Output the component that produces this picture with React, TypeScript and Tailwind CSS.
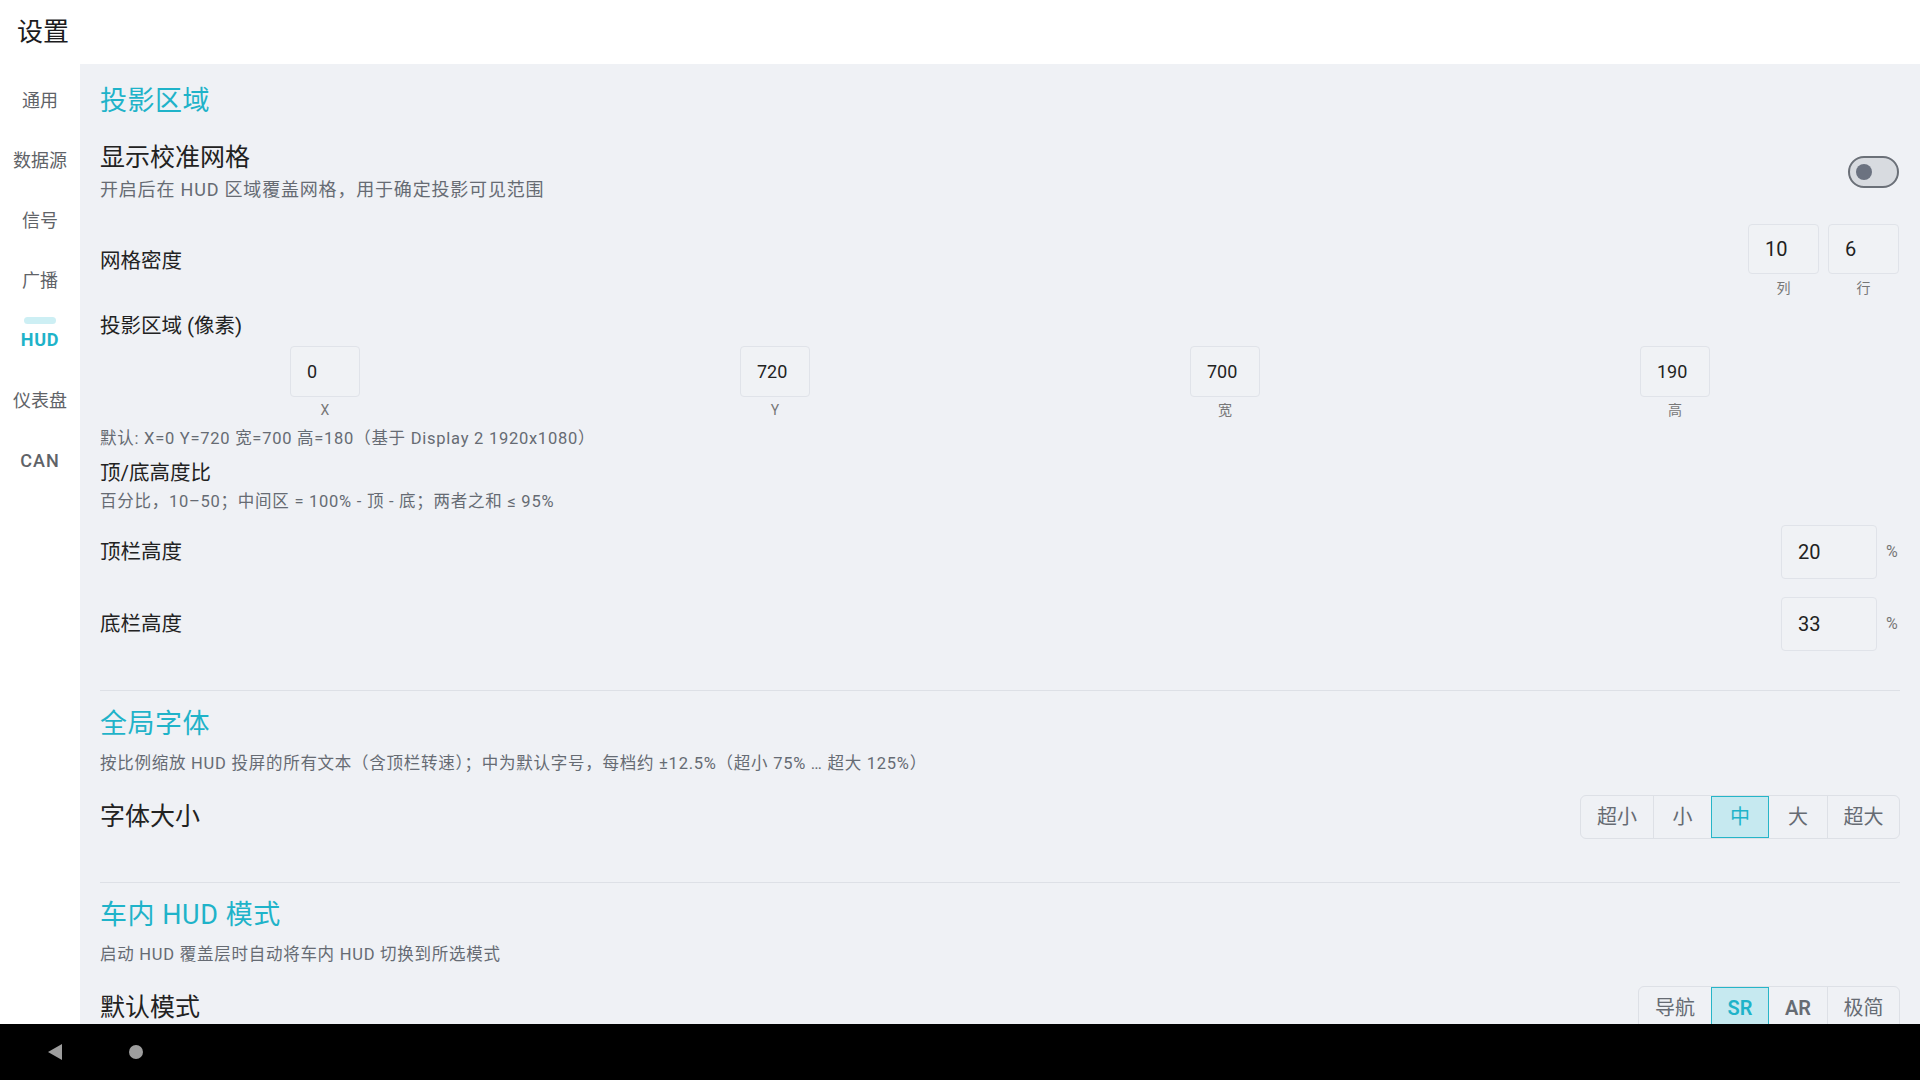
import React from 'react';

const FONT = { fontFamily: 'Roboto, "Noto Sans CJK SC", sans-serif' };

const navItems = ['通用', '数据源', '信号', '广播', 'HUD', '仪表盘', 'CAN'];

function SideNav() {
  return (
    <div className="w-[80px] shrink-0 bg-white pt-[6px]">
      {navItems.map((item) =>
        item === 'HUD' ? (
          <div key={item} className="h-[60px] flex flex-col items-center pt-[7px]">
            <div className="w-[32px] h-[7px] rounded-full bg-[#cdeff4]" />
            <div className="mt-[6px] text-[18px] leading-[20px] font-bold text-[#1fb3c9] tracking-[0.04em]">
              {item}
            </div>
          </div>
        ) : (
          <div
            key={item}
            className={
              'h-[60px] flex items-center justify-center text-[18px] text-[#5f6368] ' +
              (item === 'CAN' ? 'font-medium tracking-[0.06em]' : '')
            }
          >
            {item}
          </div>
        )
      )}
    </div>
  );
}

function Toggle() {
  return (
    <div className="w-[51px] h-[32px] rounded-full border-2 border-[#6b7078] bg-[#d8dbe0] flex items-center pl-[6px]">
      <div className="w-[16px] h-[16px] rounded-full bg-[#6b7280]" />
    </div>
  );
}

function NumBox({ value, className }: { value: string; className: string }) {
  return (
    <div
      className={
        'border border-[#e0e3e9] rounded-[4px] bg-[#f0f2f5] flex items-center pl-[16px] text-[#222] ' + className
      }
    >
      {value}
    </div>
  );
}

function Segmented({ options, active, bold }: { options: { label: string; w: string }[]; active: number; bold?: boolean }) {
  return (
    <div className="flex h-[44px] border border-[#dde0e6] rounded-[6px] overflow-hidden">
      {options.map((o, i) => {
        const isActive = i === active;
        const latin = /^[A-Z]+$/.test(o.label);
        return (
          <div
            key={o.label}
            className={
              'flex items-center justify-center text-[20px] ' +
              o.w +
              ' ' +
              (i > 0 && !isActive && i - 1 !== active ? 'border-l border-[#dde0e6] ' : '') +
              (isActive
                ? 'bg-[#c6e9f0] text-[#1fb3c9] outline outline-[1.5px] outline-[#26b5c8] -outline-offset-[1.5px] '
                : 'text-[#666b73] ') +
              (bold && latin ? 'font-semibold' : '')
            }
          >
            {o.label}
          </div>
        );
      })}
    </div>
  );
}

function SectionTitle({ children, className = '' }: { children: React.ReactNode; className?: string }) {
  return (
    <div className={'text-[27px] leading-[36px] tracking-[0.02em] text-[#1fb3c9] ' + className}>{children}</div>
  );
}

function Desc({ children, className = '' }: { children: React.ReactNode; className?: string }) {
  return (
    <div className={'text-[16.5px] leading-[22px] text-[#666b73] tracking-[0.045em] ' + className}>{children}</div>
  );
}

export default function App() {
  const coords = [
    { v: '0', l: 'X' },
    { v: '720', l: 'Y' },
    { v: '700', l: '宽' },
    { v: '190', l: '高' },
  ];

  return (
    <div style={FONT} className="w-[1920px] h-[1080px] flex flex-col overflow-hidden bg-white">
      {/* Header */}
      <div className="h-[64px] shrink-0 flex items-center pl-[17px] text-[26px] text-[#1c1c1e]">设置</div>

      <div className="flex-1 flex min-h-0">
        <SideNav />

        {/* Content */}
        <div className="flex-1 bg-[#eff1f5] overflow-hidden px-[20px] pt-[19px]">
          <SectionTitle>投影区域</SectionTitle>

          <div className="mt-[23px] h-[60px] flex items-start justify-between">
            <div>
              <div className="text-[25px] leading-[32px] text-[#222]">显示校准网格</div>
              <Desc className="mt-[4px] text-[18px] leading-[24px] tracking-[0.04em]">
                开启后在 HUD 区域覆盖网格，用于确定投影可见范围
              </Desc>
            </div>
            <div className="self-center mr-[1px]">
              <Toggle />
            </div>
          </div>

          <div className="mt-[22px] flex items-center justify-between">
            <div className="text-[20.5px] text-[#222]">网格密度</div>
            <div className="flex gap-[9px] mr-[1px]">
              {[
                { v: '10', l: '列' },
                { v: '6', l: '行' },
              ].map((c) => (
                <div key={c.l} className="flex flex-col items-center">
                  <NumBox value={c.v} className="w-[71px] h-[50px] text-[20px]" />
                  <div className="mt-[4px] text-[14px] leading-[20px] text-[#777]">{c.l}</div>
                </div>
              ))}
            </div>
          </div>

          <div className="mt-[14px] text-[20.5px] leading-[28px] text-[#222]">投影区域 (像素)</div>
          <div className="mt-[6px] flex">
            {coords.map((c) => (
              <div key={c.l} className="flex-1 flex flex-col items-center">
                <NumBox value={c.v} className="w-[70px] h-[51px] text-[18px]" />
                <div className="mt-[3px] text-[14px] leading-[20px] text-[#777]">{c.l}</div>
              </div>
            ))}
          </div>
          <Desc className="mt-[8px]">默认: X=0 Y=720 宽=700 高=180（基于 Display 2 1920x1080）</Desc>

          <div className="mt-[9px] text-[20.5px] leading-[28px] text-[#222]">顶/底高度比</div>
          <Desc className="mt-[4px]">百分比，10–50；中间区 = 100% - 顶 - 底；两者之和 ≤ 95%</Desc>

          <div className="mt-[12px] flex items-center justify-between">
            <div className="text-[20.5px] text-[#222]">顶栏高度</div>
            <div className="flex items-center gap-[9px]">
              <NumBox value="20" className="w-[96px] h-[54px] text-[20px]" />
              <span className="text-[16px] text-[#777] w-[14px]">%</span>
            </div>
          </div>
          <div className="mt-[18px] flex items-center justify-between">
            <div className="text-[20.5px] text-[#222]">底栏高度</div>
            <div className="flex items-center gap-[9px]">
              <NumBox value="33" className="w-[96px] h-[54px] text-[20px]" />
              <span className="text-[16px] text-[#777] w-[14px]">%</span>
            </div>
          </div>

          <div className="mt-[39px] border-t border-[#dde0e6]" />

          <SectionTitle className="mt-[15px]">全局字体</SectionTitle>
          <Desc className="mt-[11px]">
            按比例缩放 HUD 投屏的所有文本（含顶栏转速）；中为默认字号，每档约 ±12.5%（超小 75% … 超大 125%）
          </Desc>
          <div className="mt-[20px] flex items-center justify-between">
            <div className="text-[25px] text-[#222]">字体大小</div>
            <Segmented
              active={2}
              options={[
                { label: '超小', w: 'w-[72px]' },
                { label: '小', w: 'w-[58px]' },
                { label: '中', w: 'w-[58px]' },
                { label: '大', w: 'w-[58px]' },
                { label: '超大', w: 'w-[72px]' },
              ]}
            />
          </div>

          <div className="mt-[43px] border-t border-[#dde0e6]" />

          <SectionTitle className="mt-[14px]">车内 HUD 模式</SectionTitle>
          <Desc className="mt-[11px]">启动 HUD 覆盖层时自动将车内 HUD 切换到所选模式</Desc>
          <div className="mt-[20px] flex items-center justify-between">
            <div className="text-[25px] text-[#222]">默认模式</div>
            <Segmented
              active={1}
              bold
              options={[
                { label: '导航', w: 'w-[72px]' },
                { label: 'SR', w: 'w-[58px]' },
                { label: 'AR', w: 'w-[58px]' },
                { label: '极简', w: 'w-[72px]' },
              ]}
            />
          </div>
        </div>
      </div>

      {/* Android nav bar */}
      <div className="h-[56px] shrink-0 bg-black flex items-center">
        <svg className="ml-[48px]" width="14" height="16" viewBox="0 0 14 16">
          <path d="M0 8 L14 0 L14 16 Z" fill="#9e9e9e" />
        </svg>
        <div className="ml-[67px] w-[14px] h-[14px] rounded-full bg-[#9e9e9e]" />
      </div>
    </div>
  );
}
